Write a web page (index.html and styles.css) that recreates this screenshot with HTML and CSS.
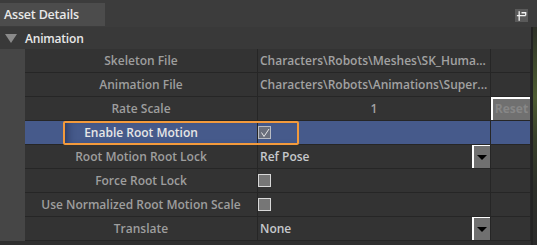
FILE: index.html
```html
<!DOCTYPE html>
<html>
<head>
<meta charset="utf-8">
<link rel="stylesheet" href="styles.css">
</head>
<body>
<div class="app">
  <div class="tabbar">
    <div class="tab">Asset Details</div>
    <div class="pin">
      <svg width="14" height="14" viewBox="0 0 14 14"><path d="M4.5 2v10M2 6.5h9.5M7 3.5h4.5v3" fill="none" stroke="#f2f2f2" stroke-width="1.4"/></svg>
    </div>
  </div>
  <div class="content">
    <div class="panel">
      <div class="category"><span class="tri"></span><span class="cat-label">Animation</span></div>
      <div class="body">
        <div class="gutter"></div>
        <div class="rows">
          <div class="row">
            <div class="name">Skeleton File</div>
            <div class="value path">Characters\Robots\Meshes\SK_Huma...</div>
            <div class="reset"></div>
          </div>
          <div class="row">
            <div class="name">Animation File</div>
            <div class="value path">Characters\Robots\Animations\Super...</div>
            <div class="reset"></div>
          </div>
          <div class="row">
            <div class="name">Rate Scale</div>
            <div class="value num">1</div>
            <div class="reset"><div class="reset-btn">Reset</div></div>
          </div>
          <div class="row selected">
            <div class="name">Enable Root Motion</div>
            <div class="value"><span class="check on"><svg width="10" height="10" viewBox="0 0 10 10"><path d="M1.5 4.5l2.5 4 5-7.5" fill="none" stroke="#e6e6e6" stroke-width="1"/></svg></span></div>
            <div class="reset"></div>
          </div>
          <div class="row">
            <div class="name">Root Motion Root Lock</div>
            <div class="value"><span class="enum">Ref Pose</span><span class="combo"><span class="arrow"></span></span></div>
            <div class="reset"></div>
          </div>
          <div class="row">
            <div class="name">Force Root Lock</div>
            <div class="value"><span class="check"></span></div>
            <div class="reset"></div>
          </div>
          <div class="row">
            <div class="name">Use Normalized Root Motion Scale</div>
            <div class="value"><span class="check"></span></div>
            <div class="reset"></div>
          </div>
          <div class="row">
            <div class="name">Translate</div>
            <div class="value"><span class="enum">None</span><span class="combo"><span class="arrow"></span></span></div>
            <div class="reset"></div>
          </div>
          <div class="highlight"></div>
        </div>
      </div>
      <div class="footer"></div>
    </div>
    <div class="edge"></div>
  </div>
</div>
</body>
</html>
```
FILE: styles.css
```css
* { box-sizing: border-box; }
html, body { margin: 0; padding: 0; }
body {
  background: #2f2f2f;
  font-family: "Open Sans", "Noto Sans", sans-serif;
  width: 537px;
  height: 245px;
  overflow: hidden;
}
.app { display: flex; flex-direction: column; width: 537px; height: 245px; }
.tabbar {
  height: 27px;
  background: #3c3c3c;
  display: flex;
  align-items: flex-start;
  position: relative;
}
.tab {
  margin-top: 3px;
  width: 105px;
  height: 23px;
  background: #4c4c4c;
  color: #e8e8e8;
  font-size: 12.5px;
  font-weight: 600;
  letter-spacing: -0.2px;
  line-height: 23px;
  padding-left: 4px;
}
.pin {
  margin-left: auto;
  margin-right: 9px;
  margin-top: 9px;
  width: 13px;
  height: 13px;
  background: #5a5a5a;
  display: flex;
  align-items: center;
  justify-content: center;
}
.pin svg { display: block; }
.content { display: flex; flex: 1; }
.panel { width: 531px; display: flex; flex-direction: column; background: #393939; }
.edge {
  width: 6px;
  border-left: 2px solid #232323;
  background: linear-gradient(#2e3128 0px, #3f4a2c 40px, #4c5a30 70px, #38402a 110px, #2d2f29 160px, #2b2b2b 218px);
}
.category {
  height: 22px;
  display: flex;
  align-items: center;
  color: #e8e8e8;
  font-size: 12px;
  font-weight: 600;
  letter-spacing: -0.2px;
}
.tri {
  width: 0; height: 0;
  margin-left: 5px;
  margin-right: 8px;
  border-left: 6px solid transparent;
  border-right: 6px solid transparent;
  border-top: 9px solid #8a8a8a;
}
.body { display: flex; }
.gutter { width: 25px; background: #464646; }
.rows { width: 506px; position: relative; }
.row {
  display: grid;
  grid-template-columns: 233px 233px 40px;
  height: 24px;
  border-bottom: 1px solid #262626;
  background: #333333;
}
.row > div { border-right: 1px solid #262626; min-width: 0; }
.name {
  text-align: center;
  line-height: 23px;
  font-size: 12px;
  font-weight: 600;
  color: #9e9e9e;
  white-space: nowrap;
}
.value {
  display: flex;
  align-items: center;
  padding-left: 2px;
  font-size: 12px;
  font-weight: 600;
  color: #a2a2a2;
  white-space: nowrap;
  overflow: hidden;
}
.value.num { justify-content: center; padding-left: 0; }
.enum { color: #c6c8cc; }
.combo {
  margin-left: auto;
  width: 18px;
  height: 23px;
  background: #707070;
  border-left: 2px solid #ffffff;
  border-top: 1px solid #ffffff;
  display: flex;
  align-items: center;
  justify-content: center;
}
.arrow {
  width: 0; height: 0;
  margin-top: 1px;
  border-left: 5px solid transparent;
  border-right: 5px solid transparent;
  border-top: 5px solid #000000;
}
.check {
  margin-left: -2px;
  width: 13px;
  height: 13px;
  border: 1px solid #d8d8d8;
  background: #767676;
  display: flex;
  align-items: center;
  justify-content: center;
}
.check.on { background: #6a6f7c; border-color: #b8bcc4; }
.check svg { display: block; }
.reset-btn {
  height: 23px;
  background: #707070;
  border-left: 2px solid #ffffff;
  border-top: 2px solid #ffffff;
  color: #878787;
  font-size: 12px;
  font-weight: 700;
  line-height: 20px;
  text-align: center;
}
.row.selected { background: #465a8b; }
.row.selected .name { color: #e6e6e6; }
.footer { flex: 1; background: #2f2f2f; }
.highlight {
  position: absolute;
  left: 38px;
  top: 72px;
  width: 236px;
  height: 24px;
  border: 2px solid #f39a3c;
  border-radius: 2px;
  box-shadow: inset 8px 0 8px -6px rgba(20, 30, 60, 0.6);
}
```
